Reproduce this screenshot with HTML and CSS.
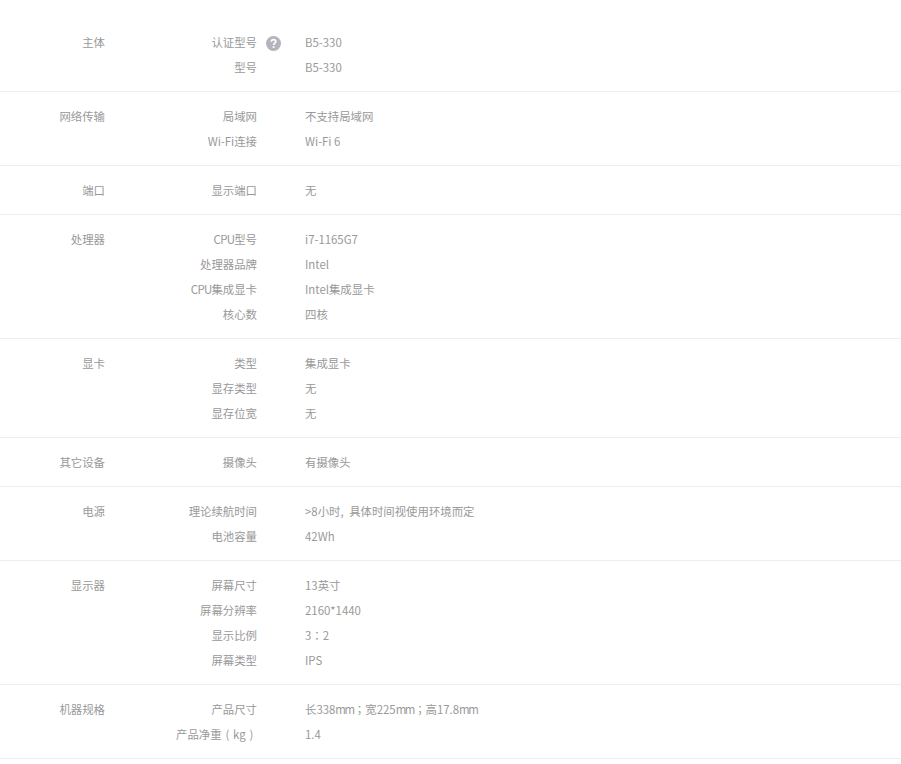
FILE: index.html
```html
<!DOCTYPE html>
<html lang="zh-CN">
<head>
<meta charset="utf-8">
<title>规格参数</title>
<link rel="stylesheet" href="styles.css">
</head>
<body>
<div class="specs">
  <section class="group">
    <div class="group-name">主体</div>
    <div class="rows">
      <div class="row"><div class="key">认证型号</div><div class="help"><svg class="help-icon" viewBox="0 0 15 15"><circle cx="7.5" cy="7.5" r="7.5" fill="#b4b4be"/><path d="M5.3 5.8C5.4 4.5 6.3 3.7 7.6 3.7C8.9 3.7 9.8 4.5 9.8 5.6C9.8 7 7.6 7.2 7.6 8.9" fill="none" stroke="#fff" stroke-width="1.7"/><circle cx="7.6" cy="11" r="1.05" fill="#fff"/></svg></div><div class="val">B5-330</div></div>
      <div class="row"><div class="key">型号</div><div class="help"></div><div class="val">B5-330</div></div>
    </div>
  </section>
  <section class="group">
    <div class="group-name">网络传输</div>
    <div class="rows">
      <div class="row"><div class="key">局域网</div><div class="help"></div><div class="val">不支持局域网</div></div>
      <div class="row"><div class="key">Wi-Fi连接</div><div class="help"></div><div class="val">Wi-Fi 6</div></div>
    </div>
  </section>
  <section class="group">
    <div class="group-name">端口</div>
    <div class="rows">
      <div class="row"><div class="key">显示端口</div><div class="help"></div><div class="val">无</div></div>
    </div>
  </section>
  <section class="group">
    <div class="group-name">处理器</div>
    <div class="rows">
      <div class="row"><div class="key"><span class="tight">CPU</span>型号</div><div class="help"></div><div class="val">i7-1165G7</div></div>
      <div class="row"><div class="key">处理器品牌</div><div class="help"></div><div class="val">Intel</div></div>
      <div class="row"><div class="key"><span class="tight">CPU</span>集成显卡</div><div class="help"></div><div class="val">Intel集成显卡</div></div>
      <div class="row"><div class="key">核心数</div><div class="help"></div><div class="val">四核</div></div>
    </div>
  </section>
  <section class="group">
    <div class="group-name">显卡</div>
    <div class="rows">
      <div class="row"><div class="key">类型</div><div class="help"></div><div class="val">集成显卡</div></div>
      <div class="row"><div class="key">显存类型</div><div class="help"></div><div class="val">无</div></div>
      <div class="row"><div class="key">显存位宽</div><div class="help"></div><div class="val">无</div></div>
    </div>
  </section>
  <section class="group">
    <div class="group-name">其它设备</div>
    <div class="rows">
      <div class="row"><div class="key">摄像头</div><div class="help"></div><div class="val">有摄像头</div></div>
    </div>
  </section>
  <section class="group">
    <div class="group-name">电源</div>
    <div class="rows">
      <div class="row"><div class="key">理论续航时间</div><div class="help"></div><div class="val wide">&gt;8小时, 具体时间视使用环境而定</div></div>
      <div class="row"><div class="key">电池容量</div><div class="help"></div><div class="val">42Wh</div></div>
    </div>
  </section>
  <section class="group">
    <div class="group-name">显示器</div>
    <div class="rows">
      <div class="row"><div class="key">屏幕尺寸</div><div class="help"></div><div class="val">13英寸</div></div>
      <div class="row"><div class="key">屏幕分辨率</div><div class="help"></div><div class="val">2160*1440</div></div>
      <div class="row"><div class="key">显示比例</div><div class="help"></div><div class="val">3<span class="punct" lang="zh-TW">：</span>2</div></div>
      <div class="row"><div class="key">屏幕类型</div><div class="help"></div><div class="val">IPS</div></div>
    </div>
  </section>
  <section class="group">
    <div class="group-name">机器规格</div>
    <div class="rows">
      <div class="row"><div class="key">产品尺寸</div><div class="help"></div><div class="val">长338<span class="unit">mm</span><span class="punct" lang="zh-TW">；</span>宽225<span class="unit">mm</span><span class="punct" lang="zh-TW">；</span>高17.8<span class="unit">mm</span></div></div>
      <div class="row"><div class="key">产品净重<span class="paren">(</span>kg<span class="paren">)</span></div><div class="help"></div><div class="val">1.4</div></div>
    </div>
  </section>
</div>
</body>
</html>
```
FILE: styles.css
```css
html, body {
  margin: 0;
  padding: 0;
  background: #fff;
}
.specs {
  padding-top: 18px;
  font-family: "Noto Sans CJK SC", sans-serif;
  font-size: 11.4px;
  color: #999;
}
.group {
  display: flex;
  padding: 12px 0 11px;
  border-bottom: 1px solid #eee;
}
.group-name {
  width: 105px;
  flex: none;
  text-align: right;
  line-height: 25px;
}
.rows {
  flex: 1;
}
.row {
  display: flex;
  height: 25px;
  line-height: 25px;
}
.key {
  width: 152px;
  flex: none;
  text-align: right;
}
.help {
  width: 48px;
  flex: none;
  display: flex;
  align-items: center;
  padding-left: 9px;
  box-sizing: border-box;
}
.help-icon {
  width: 15px;
  height: 15px;
  display: block;
  margin-top: 2px;
}
.val {
  flex: 1;
}
.wide {
  word-spacing: 3px;
}
.tight {
  letter-spacing: -0.7px;
}
.unit {
  letter-spacing: -1.3px;
}
.punct {
  font-family: "Noto Sans CJK TC", sans-serif;
}
.paren {
  display: inline-block;
  width: 1em;
  text-align: center;
}
```
